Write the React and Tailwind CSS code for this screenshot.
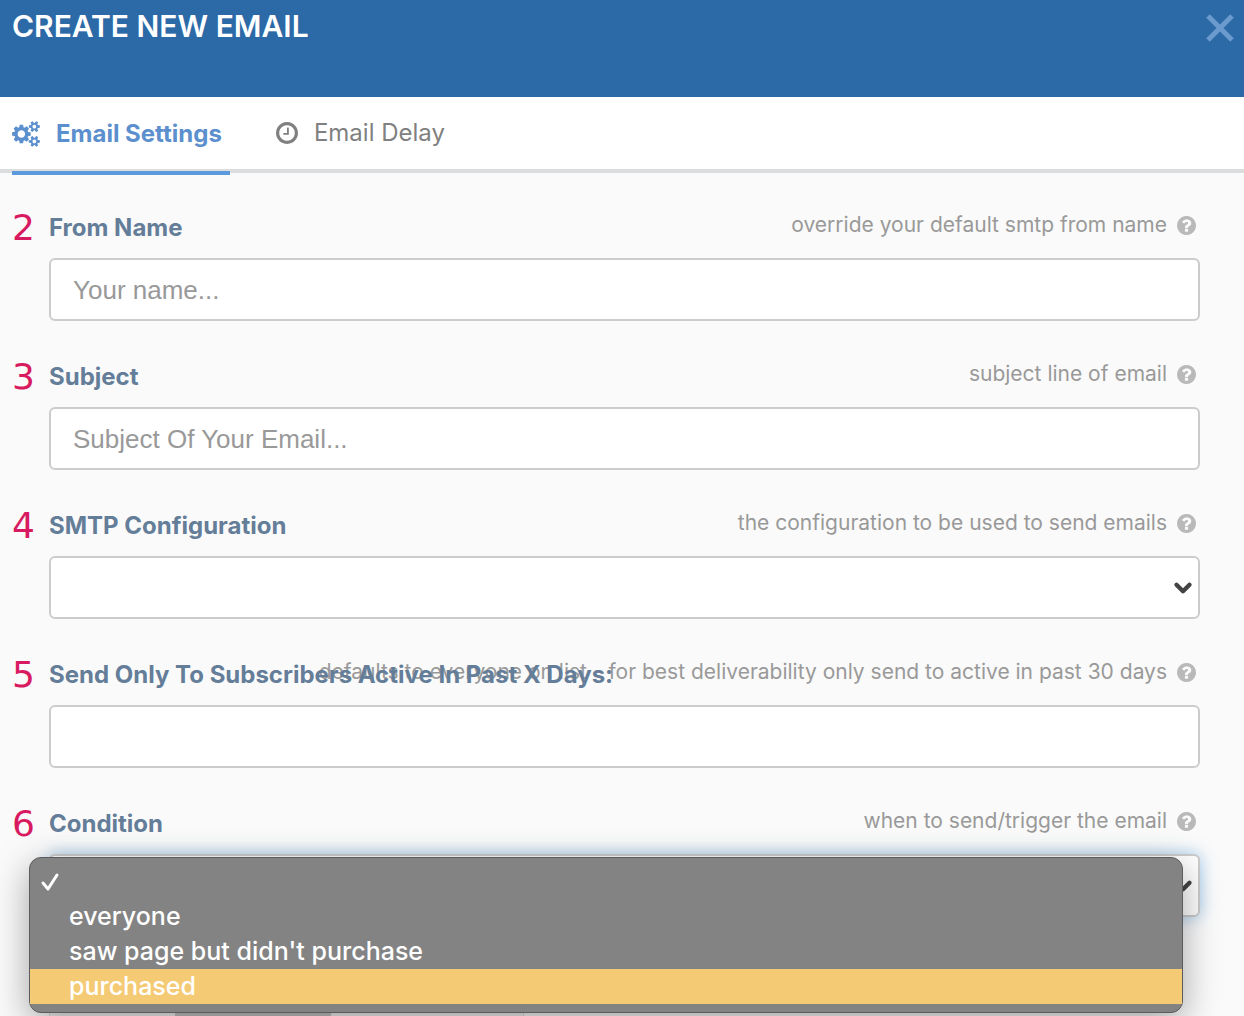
import { useState } from "react";
import { ChevronDown } from "lucide-react";

const conditions = ["", "everyone", "saw page but didn't purchase", "purchased"];

function CogsIcon() {
  return (
    <svg
      viewBox="0 0 1920 1792"
      className="h-[26px] w-7 shrink-0"
      fill="currentColor"
      aria-hidden="true"
    >
      <path d="M896 896q0-106-75-181t-181-75-181 75-75 181 75 181 181 75 181-75 75-181zm768 512q0-52-38-90t-90-38-90 38-38 90q0 53 37.5 90.5t90.5 37.5 90.5-37.5 37.5-90.5zm0-1024q0-52-38-90t-90-38-90 38-38 90q0 53 37.5 90.5t90.5 37.5 90.5-37.5 37.5-90.5zm-384 421v185q0 10-7 19.5t-16 10.5l-155 24q-11 35-32 76 34 48 90 115 7 11 7 20 0 12-7 19-23 30-82.5 89.5t-78.5 59.5q-11 0-21-7l-115-90q-37 19-77 31-11 108-23 155-7 24-30 24h-186q-11 0-20-7.5t-10-17.5l-23-153q-34-10-75-31l-118 89q-7 7-20 7-11 0-21-8-144-133-144-160 0-9 7-19 10-14 41-53t47-61q-23-44-35-82l-152-24q-10-1-17-9.5t-7-19.5v-185q0-10 7-19.5t16-10.5l155-24q11-35 32-76-34-48-90-115-7-11-7-20 0-12 7-20 22-30 82-89t79-59q11 0 21 7l115 90q34-18 77-32 11-108 23-154 7-24 30-24h186q11 0 20 7.5t10 17.5l23 153q34 10 75 31l118-89q8-7 20-7 11 0 21 8 144 133 144 160 0 9-7 19-12 16-42 54t-45 60q23 48 34 82l152 23q10 2 17 10.5t7 19.5zm640 533v140q0 16-149 31-12 27-30 52 51 113 51 138 0 4-4 7-122 71-124 71-8 0-46-47t-52-68q-20 2-30 2t-30-2q-14 21-52 68t-46 47q-2 0-124-71-4-3-4-7 0-25 51-138-18-25-30-52-149-15-149-31v-140q0-16 149-31 13-29 30-52-51-113-51-138 0-4 4-7 4-2 35-20t59-34 30-16q8 0 46 46.5t52 67.5q20-2 30-2t30 2q51-71 92-112l6-2q4 0 124 70 4 3 4 7 0 25-51 138 17 23 30 52 149 15 149 31zm0-1024v140q0 16-149 31-12 27-30 52 51 113 51 138 0 4-4 7-122 71-124 71-8 0-46-47t-52-68q-20 2-30 2t-30-2q-14 21-52 68t-46 47q-2 0-124-71-4-3-4-7 0-25 51-138-18-25-30-52-149-15-149-31v-140q0-16 149-31 13-29 30-52-51-113-51-138 0-4 4-7 4-2 35-20t59-34 30-16q8 0 46 46.5t52 67.5q20-2 30-2t30 2q51-71 92-112l6-2q4 0 124 70 4 3 4 7 0 25-51 138 17 23 30 52 149 15 149 31z" />
    </svg>
  );
}

function ClockIcon() {
  return (
    <svg
      viewBox="128 128 1536 1536"
      className="size-[22px] shrink-0"
      fill="currentColor"
      aria-hidden="true"
    >
      <path d="M1024 544v448q0 14-9 23t-23 9h-320q-14 0-23-9t-9-23v-64q0-14 9-23t23-9h224v-352q0-14 9-23t23-9h64q14 0 23 9t9 23zm416 352q0-148-73-273t-198-198-273-73-273 73-198 198-73 273 73 273 198 198 273 73 273-73 198-198 73-273zm224 0q0 209-103 385.5t-279.5 279.5-385.5 103-385.5-103-279.5-279.5-103-385.5 103-385.5 279.5-279.5 385.5-103 385.5 103 279.5 279.5 103 385.5z" />
    </svg>
  );
}

function HelpIcon() {
  return (
    <svg
      viewBox="128 128 1536 1536"
      className="size-[19px] shrink-0 text-[#b9b9b9]"
      fill="currentColor"
      aria-hidden="true"
    >
      <path d="M1024 1376v-192q0-14-9-23t-23-9h-192q-14 0-23 9t-9 23v192q0 14 9 23t23 9h192q14 0 23-9t9-23zm256-672q0-88-55.5-163t-138.5-116-170-41q-243 0-371 213-15 24 8 42l132 100q7 6 19 6 16 0 25-12 53-68 86-92 34-24 86-24 48 0 85.5 26t37.5 59q0 38-20 61t-68 45q-63 28-115.5 86.5t-52.5 125.5v36q0 14 9 23t23 9h192q14 0 23-9t9-23q0-19 21.5-49.5t54.5-49.5q32-18 49-28.5t46-35 44.5-48 28-60.5 12.5-81zm384 192q0 209-103 385.5t-279.5 279.5-385.5 103-385.5-103-279.5-279.5-103-385.5 103-385.5 279.5-279.5 385.5-103 385.5 103 279.5 279.5 103 385.5z" />
    </svg>
  );
}

function Field({ step, id, label, hint, children }) {
  return (
    <div className="flex">
      <span className="w-[37px] shrink-0 font-['DejaVu_Sans'] text-4xl leading-8 text-[#d81b60]">
        {step}
      </span>
      <div className="min-w-0 flex-1">
        {/* label and hint share one cell, so long ones overlap */}
        <div className="mb-3.5 grid h-8">
          <div className="col-start-1 row-start-1 flex h-[26px] items-center gap-2.5 justify-self-end pr-1 text-[21px] leading-[26px] text-[#999]">
            <span id={`${id}-hint`} className="whitespace-nowrap">
              {hint}
            </span>
            <HelpIcon />
          </div>
          <label
            htmlFor={id}
            className="col-start-1 row-start-1 justify-self-start whitespace-nowrap text-2xl leading-8 font-bold text-[#647d98]"
          >
            {label}
          </label>
        </div>
        {children}
      </div>
    </div>
  );
}

function TextInput({ id, placeholder }) {
  return (
    <input
      id={id}
      type="text"
      placeholder={placeholder}
      aria-describedby={`${id}-hint`}
      className="block h-[63px] w-full rounded-md border-2 border-[#ccc] bg-white px-[22px] pt-0.5 font-['Liberation_Sans'] text-[26px] text-[#555] outline-none placeholder:text-[#999]"
    />
  );
}

function SelectBox({ id, options, value, onChange, active }) {
  return (
    <div className="grid items-center">
      <select
        id={id}
        value={value}
        onChange={onChange}
        aria-describedby={`${id}-hint`}
        className={`col-start-1 row-start-1 h-[63px] w-full appearance-none rounded-md border-2 border-[#ccc] bg-white px-[22px] text-2xl text-[#555] outline-none ${
          active ? "shadow-[0_0_16px_rgba(102,175,233,0.6)]" : ""
        }`}
      >
        {options.map((option) => (
          <option key={option} value={option}>
            {option}
          </option>
        ))}
      </select>
      <ChevronDown
        className="pointer-events-none col-start-1 row-start-1 mr-1 justify-self-end text-[#444]"
        size={26}
        strokeWidth={4}
      />
    </div>
  );
}

export default function App() {
  const [condition, setCondition] = useState("");
  const [hovered, setHovered] = useState("purchased");

  return (
    <div className="h-screen overflow-hidden bg-[#fafafa] font-['Inter',sans-serif]">
      <header className="flex h-[97px] items-start justify-between bg-[#2c69a7] px-3 pt-2">
        <h1 className="text-[30px] leading-9 font-semibold text-white">
          CREATE NEW EMAIL
        </h1>
        <button type="button" aria-label="Close" className="-mr-1 text-[#6b9bce]">
          <svg viewBox="0 0 32 32" className="mt-1 size-8" aria-hidden="true">
            <path
              d="M4 4L28 28M28 4L4 28"
              stroke="currentColor"
              strokeWidth="5"
            />
          </svg>
        </button>
      </header>

      <nav className="flex h-[76px] gap-[46px] border-b-4 border-[#dcdddf] bg-white px-3">
        <a
          href="#settings"
          className="-mb-1.5 flex h-[78px] items-center gap-4 border-b-4 border-[#5b9bdd] pr-2 text-2xl font-bold text-[#5b8fcd]"
        >
          <CogsIcon />
          Email Settings
        </a>
        <a
          href="#delay"
          className="flex items-center gap-4 text-2xl text-[#808080]"
        >
          <ClockIcon />
          Email Delay
        </a>
      </nav>

      <form className="flex flex-col gap-10 pt-[39px] pr-11 pl-3">
        <Field
          step="2"
          id="from-name"
          label="From Name"
          hint="override your default smtp from name"
        >
          <TextInput id="from-name" placeholder="Your name..." />
        </Field>
        <Field
          step="3"
          id="subject"
          label="Subject"
          hint="subject line of email"
        >
          <TextInput id="subject" placeholder="Subject Of Your Email..." />
        </Field>
        <Field
          step="4"
          id="smtp"
          label="SMTP Configuration"
          hint="the configuration to be used to send emails"
        >
          <SelectBox id="smtp" options={[""]} />
        </Field>
        <Field
          step="5"
          id="active-days"
          label="Send Only To Subscribers Active In Past X Days:"
          hint="defaults to everyone on list - for best deliverability only send to active in past 30 days"
        >
          <TextInput id="active-days" />
        </Field>
        <Field
          step="6"
          id="condition"
          label="Condition"
          hint="when to send/trigger the email"
        >
          <div className="relative">
            <SelectBox
              id="condition"
              options={conditions}
              value={condition}
              onChange={(e) => setCondition(e.target.value)}
              active
            />
            <ul
              role="listbox"
              aria-label="Condition"
              className="absolute top-[3px] right-[17px] -left-5 z-10 rounded-xl border border-[#5c5c5e] bg-[#838383] pt-1.5 pb-2 text-[25px] leading-[35px] font-medium text-white shadow-[0_10px_36px_rgba(0,0,0,0.35)]"
            >
              {conditions.map((option) => (
                <li
                  key={option}
                  role="option"
                  aria-selected={option === condition}
                  onMouseEnter={() => setHovered(option)}
                  onClick={() => setCondition(option)}
                  className={`flex h-[35px] items-center pl-[9px] ${
                    hovered === option ? "bg-[#f5ca75]" : ""
                  }`}
                >
                  <span className="w-[30px] shrink-0">
                    {option === condition && (
                      <svg
                        viewBox="0 0 22 22"
                        className="size-[22px]"
                        fill="none"
                        aria-hidden="true"
                      >
                        <path
                          d="M4 12L9 18L18 4"
                          stroke="currentColor"
                          strokeWidth="3"
                          strokeLinecap="round"
                          strokeLinejoin="round"
                        />
                      </svg>
                    )}
                  </span>
                  {option}
                </li>
              ))}
            </ul>
          </div>
        </Field>

        {/* editor toolbar, mostly covered by the open menu */}
        <div className="ml-[37px] flex h-20 w-2/5 border border-[#ddd] bg-[#f1f1f1] pl-[125px]">
          <div className="w-[156px] bg-[#c4c2c2]" />
        </div>
      </form>
    </div>
  );
}
